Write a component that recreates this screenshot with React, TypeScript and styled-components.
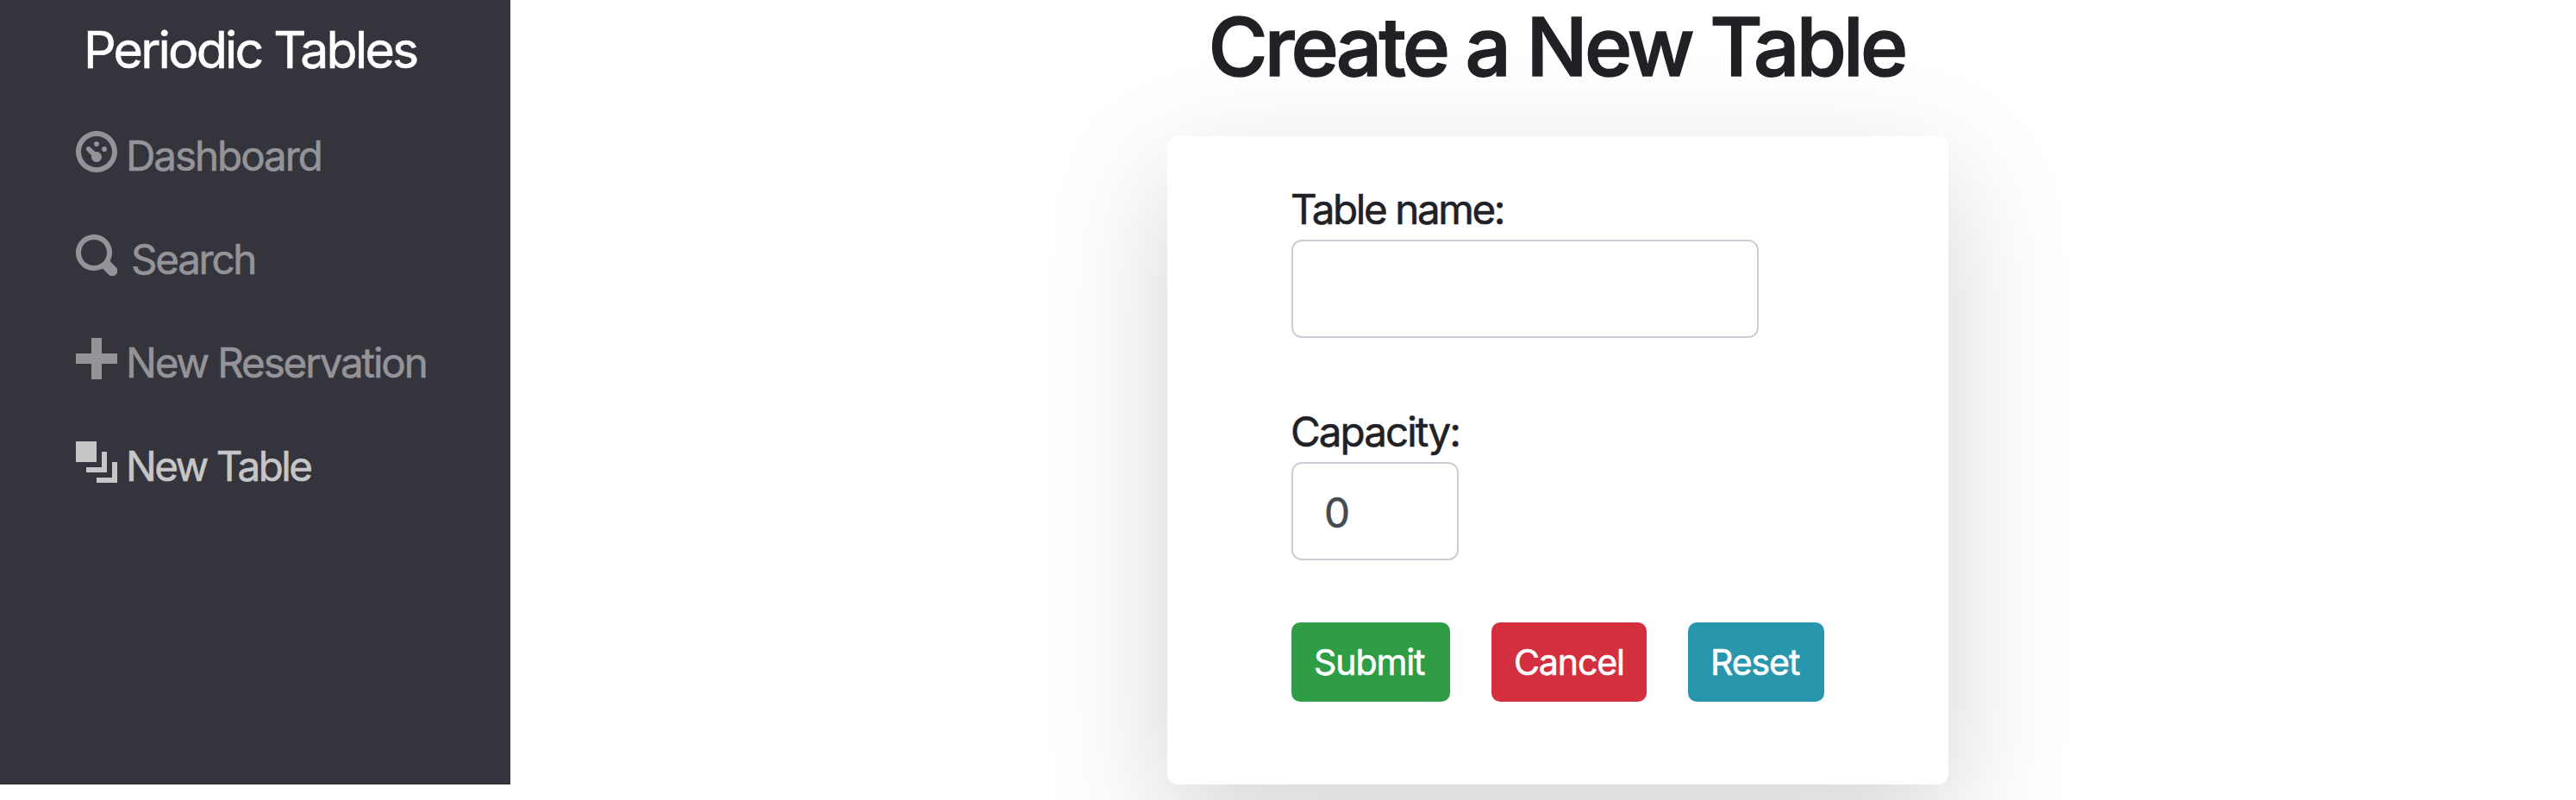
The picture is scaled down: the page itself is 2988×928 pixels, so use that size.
import React from "react";
import styled, { createGlobalStyle } from "styled-components";

const GlobalStyle = createGlobalStyle`
  *, *::before, *::after { box-sizing: border-box; }
  html, body { margin: 0; padding: 0; background: #fff; overflow: hidden; }
  body {
    font-family: Inter, "Liberation Sans", sans-serif;
    font-size: 47.5px;
    line-height: 72px;
    color: #1f2124;
    -webkit-text-stroke: 0.6px currentColor;
  }
`;

const Page = styled.div`
  display: flex;
  align-items: flex-start;
  height: 928px;
`;

const Sidebar = styled.nav`
  flex: none;
  width: 592px;
  height: 910px;
  padding-top: 13px;
  background: #34343d;
  border-bottom: 2px solid #312f38;
`;

const Brand = styled.a`
  display: block;
  padding-left: 97px;
  font-size: 59px;
  line-height: 90px;
  letter-spacing: -2.78px;
  white-space: nowrap;
  color: #fff;
`;

const NavList = styled.ul`
  list-style: none;
  margin: 17px 0 0;
  padding: 0;
`;

const NavItem = styled.li<{ $active?: boolean }>`
  display: flex;
  align-items: center;
  height: 120px;
  padding-left: 88px;
  color: ${(p) => (p.$active ? "#c6c6c9" : "#949398")};
`;

const Icon = styled.svg`
  flex: none;
  width: 48px;
  height: 48px;
  margin-bottom: 8px;
  fill: currentColor;
`;

const NavLabel = styled.a<{ $gap: number; $tracking: number }>`
  margin-top: 2px;
  margin-left: ${(p) => p.$gap}px;
  letter-spacing: ${(p) => p.$tracking}px;
  white-space: nowrap;
`;

const Main = styled.main`
  flex: 1;
  display: flex;
  flex-direction: column;
  align-items: center;
  padding-left: 34px;
`;

const Title = styled.h1`
  position: relative;
  z-index: 1;
  margin: 0 0 50px;
  padding-right: 3px;
  font-size: 94px;
  font-weight: 500;
  line-height: 108px;
  letter-spacing: -3.74px;
  white-space: nowrap;
  -webkit-text-stroke: 1.6px currentColor;
`;

const Card = styled.form`
  display: flex;
  flex-direction: column;
  align-items: flex-start;
  width: 906px;
  height: 752px;
  padding: 48px 144px 96px;
  background: #fff;
  border-radius: 12px;
  box-shadow: 0 48px 144px rgba(0, 0, 0, 0.175);
`;

const Field = styled.div`
  display: flex;
  flex-direction: column;
  margin-bottom: 72px;
`;

const FieldLabel = styled.label<{ $tracking: number }>`
  height: 72px;
  padding-top: 1px;
  margin-left: -1px;
  letter-spacing: ${(p) => p.$tracking}px;
  white-space: nowrap;
`;

const Input = styled.input<{ $width: number }>`
  width: ${(p) => p.$width}px;
  height: 114px;
  margin: 0;
  padding: 3px 36px 0;
  border: 2px solid #caced5;
  border-radius: 12px;
  outline: none;
  background: #fff;
  font: inherit;
  color: #444a51;
  appearance: textfield;
`;

const Actions = styled.div`
  display: flex;
  gap: 48px;
`;

const Button = styled.button<{ $width: number; $color: string }>`
  width: ${(p) => p.$width}px;
  height: 92px;
  padding: 1px 0 0 26px;
  border: 0;
  border-radius: 10px;
  background: ${(p) => p.$color};
  color: #fff;
  font-family: inherit;
  font-size: 41px;
  line-height: 91px;
  letter-spacing: -1.08px;
  text-align: left;
  white-space: nowrap;
`;

const navItems = [
  {
    label: "Dashboard",
    gap: 10,
    tracking: -2.01,
    path: "M4 0c-2.2 0-4 1.8-4 4s1.8 4 4 4 4-1.8 4-4-1.8-4-4-4zm0 1c1.66 0 3 1.34 3 3s-1.34 3-3 3-3-1.34-3-3 1.34-3 3-3zm0 1c-.28 0-.5.22-.5.5s.22.5.5.5.5-.22.5-.5-.22-.5-.5-.5zm-1.66 1a.5.5 0 0 0-.19.84l.91.91a1 1 0 0 0-.06.25c0 .55.45 1 1 1s1-.45 1-1-.45-1-1-1c-.09 0-.17.03-.25.06l-.91-.91a.5.5 0 0 0-.5-.15zm3.16 0c-.28 0-.5.22-.5.5s.22.5.5.5.5-.22.5-.5-.22-.5-.5-.5z",
  },
  {
    label: "Search",
    gap: 16,
    tracking: -2.25,
    path: "M3.5 0c-1.93 0-3.5 1.57-3.5 3.5s1.57 3.5 3.5 3.5c.59 0 1.17-.14 1.66-.41a1 1 0 0 0 .13.13l1 1a1.02 1.02 0 1 0 1.44-1.44l-1-1a1 1 0 0 0-.16-.13c.27-.49.44-1.06.44-1.66 0-1.93-1.55-3.5-3.5-3.5zm0 1c1.39 0 2.5 1.11 2.5 2.5 0 .66-.24 1.27-.66 1.72l-.03.03a1 1 0 0 0-.13.13c-.44.4-1.04.63-1.69.63-1.39 0-2.5-1.11-2.5-2.5s1.11-2.5 2.5-2.5z",
  },
  {
    label: "New Reservation",
    gap: 10,
    tracking: -2.13,
    path: "M3 0v3h-3v2h3v3h2v-3h3v-2h-3v-3h-2z",
  },
  {
    label: "New Table",
    gap: 10,
    tracking: -2.5,
    active: true,
    path: "M0 0v4h4v-4h-4zm5 2v3h-3v1h4v-4h-1zm2 2v3h-3v1h4v-4h-1z",
  },
];

export default function App() {
  return (
    <>
      <GlobalStyle />
      <Page>
        <Sidebar>
          <Brand>Periodic Tables</Brand>
          <NavList>
            {navItems.map((item) => (
              <NavItem key={item.label} $active={item.active}>
                <Icon viewBox="0 0 8 8" aria-hidden="true">
                  <path d={item.path} />
                </Icon>
                <NavLabel $gap={item.gap} $tracking={item.tracking}>
                  {item.label}
                </NavLabel>
              </NavItem>
            ))}
          </NavList>
        </Sidebar>
        <Main>
          <Title>Create a New Table</Title>
          <Card>
            <Field>
              <FieldLabel htmlFor="table_name" $tracking={-2.38}>
                Table name:
              </FieldLabel>
              <Input id="table_name" type="text" $width={542} />
            </Field>
            <Field>
              <FieldLabel htmlFor="capacity" $tracking={-1.9}>
                Capacity:
              </FieldLabel>
              <Input id="capacity" type="number" defaultValue={0} $width={194} />
            </Field>
            <Actions>
              <Button type="button" $width={184} $color="#2f9c46">
                Submit
              </Button>
              <Button type="button" $width={180} $color="#d32f3f">
                Cancel
              </Button>
              <Button type="button" $width={158} $color="#2896ad">
                Reset
              </Button>
            </Actions>
          </Card>
        </Main>
      </Page>
    </>
  );
}
